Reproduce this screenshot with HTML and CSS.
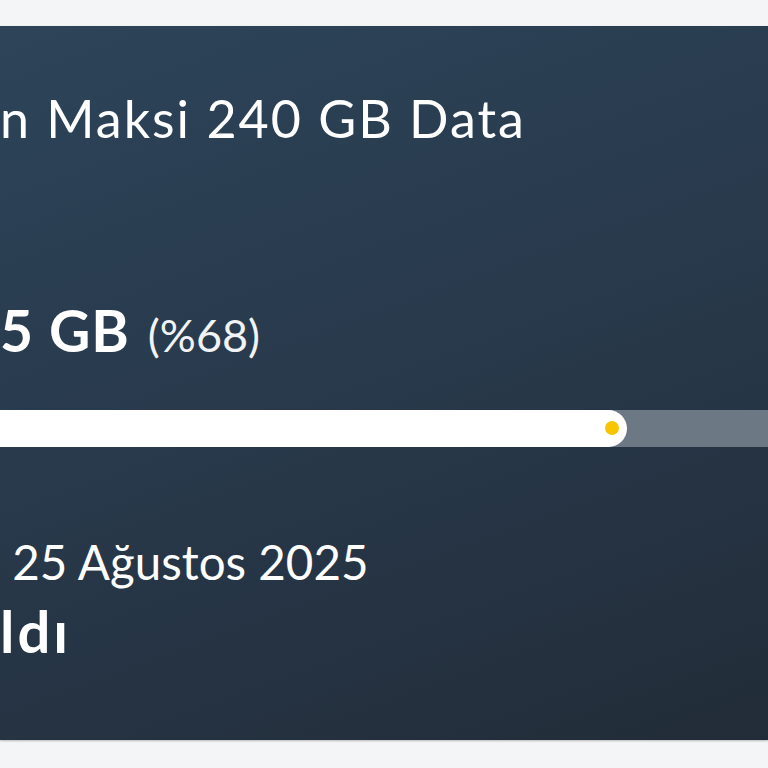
FILE: index.html
```html
<!DOCTYPE html>
<html lang="tr">

<head>
    <meta charset="UTF-8">
    <meta name="viewport" content="width=device-width, initial-scale=1.0">
    <title>Paket Kullanımı</title>
    <link rel="stylesheet" href="styles.css">
</head>

<body>
    <div class="page">
        <div class="usage-card">
            <p class="package-name">n Maksi 240 GB Data</p>
            <div class="amount">
                <span class="amount-value">5 GB</span>
                <span class="amount-percent">(%68)</span>
            </div>
            <div class="progress">
                <div class="progress-fill" style="width: 627px;">
                    <span class="progress-dot"></span>
                </div>
            </div>
            <p class="renew-date"> 25 Ağustos 2025</p>
            <p class="renew-status">ldı</p>
        </div>
    </div>
</body>

</html>
```

FILE: styles.css
```css
body {
    font-family: 'Lato', 'Noto Sans', sans-serif;
    margin: 0;
    padding: 0;
    background: #f4f5f7;
    color: #fff;
}

.page {
    padding-top: 26px;
    height: 742px;
}

.usage-card {
    height: 714px;
    box-sizing: border-box;
    padding-top: 61px;
    background: linear-gradient(160deg, #2d4459 0%, #28394b 50%, #222c38 100%);
    box-shadow: 0 1px 2px rgba(0, 0, 0, 0.25);
    overflow: hidden;
    display: flex;
    flex-direction: column;
}

.package-name {
    margin: 0;
    font-size: 52px;
    line-height: 1.2;
    letter-spacing: 2px;
    white-space: nowrap;
}

.amount {
    margin-top: 147px;
    display: flex;
    align-items: baseline;
    gap: 18px;
}

.amount-value {
    font-size: 57px;
    font-weight: 700;
    line-height: 1.2;
    letter-spacing: 1px;
}

.amount-percent {
    font-size: 45px;
    line-height: 1.2;
    color: #f1f3f6;
}

.progress {
    margin-top: 45px;
    height: 37px;
    background: #6c7884;
    display: flex;
}

.progress-fill {
    height: 100%;
    background: #fff;
    border-radius: 0 19px 19px 0;
    display: flex;
    justify-content: flex-end;
    align-items: center;
    padding-right: 8px;
    box-sizing: border-box;
}

.progress-dot {
    width: 14px;
    height: 14px;
    border-radius: 50%;
    background: #f7c600;
}

.renew-date {
    margin: 86px 0 0;
    font-size: 47.5px;
    line-height: 1.2;
    white-space: pre;
}

.renew-status {
    margin: 6px 0 0;
    font-size: 58px;
    font-weight: 700;
    line-height: 1.2;
    letter-spacing: 3px;
}
```
